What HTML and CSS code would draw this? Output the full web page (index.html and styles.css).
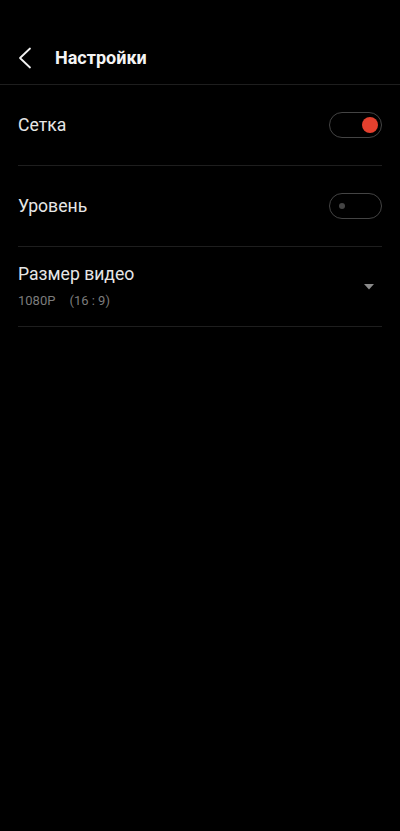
FILE: index.html
```html
<!DOCTYPE html>
<html lang="ru">
<head>
    <meta charset="UTF-8">
    <meta name="viewport" content="width=device-width, initial-scale=1.0">
    <title>Настройки</title>
    <link rel="stylesheet" href="styles.css">
</head>
<body>

    <div class="header">
        <svg class="back" width="14" height="22" viewBox="0 0 14 22">
            <polyline points="12,1.5 2,11 12,20.5" fill="none" stroke="#f2f2f2" stroke-width="1.8" stroke-linecap="round" stroke-linejoin="round"/>
        </svg>
        <span class="title">Настройки</span>
    </div>

    <div class="list">
        <div class="row">
            <span class="label">Сетка</span>
            <div class="toggle on"><span class="knob"></span></div>
        </div>
        <div class="row">
            <span class="label">Уровень</span>
            <div class="toggle"><span class="knob"></span></div>
        </div>
        <div class="row last">
            <div class="text">
                <span class="label">Размер видео</span>
                <span class="sub"><span class="res">1080P</span>(16 : 9)</span>
            </div>
            <svg class="arrow" width="10" height="6" viewBox="0 0 10 6">
                <polygon points="0,0 10,0 5,5.5" fill="#8a8a8a"/>
            </svg>
        </div>
    </div>

</body>
</html>
```

FILE: styles.css
```css
body {
    margin: 0;
    background-color: #000;
    font-family: Roboto, "Noto Sans", sans-serif;
    color: #e8e8e8;
}

.header {
    height: 54px;
    padding-top: 30px;
    padding-left: 18px;
    display: flex;
    align-items: center;
    border-bottom: 1px solid #1e1e1e;
}

.back {
    margin-top: 1px;
}

.title {
    margin-left: 23px;
    font-size: 18px;
    font-weight: bold;
    color: #f4f4f4;
}

.list {
    margin: 0 18px;
}

.row {
    height: 80px;
    display: flex;
    align-items: center;
    justify-content: space-between;
    border-bottom: 1px solid #1e1e1e;
}

.row.last {
    height: 79px;
}

.label {
    font-size: 17.6px;
    color: #e6e6e6;
}

.text {
    display: flex;
    flex-direction: column;
    gap: 9px;
    margin-top: -1px;
}

.sub {
    font-size: 13px;
    color: #7c7c7c;
}

.res {
    margin-right: 14px;
}

.arrow {
    margin-right: 8px;
}

.toggle {
    box-sizing: border-box;
    width: 53px;
    height: 26px;
    border: 1.5px solid #444;
    border-radius: 13px;
    display: flex;
    align-items: center;
    padding: 0 3.5px 0 9px;
}

.toggle .knob {
    width: 6px;
    height: 6px;
    border-radius: 50%;
    background-color: #444;
}

.toggle.on {
    justify-content: flex-end;
}

.toggle.on .knob {
    width: 16px;
    height: 16px;
    background-color: #e4402e;
}
```
